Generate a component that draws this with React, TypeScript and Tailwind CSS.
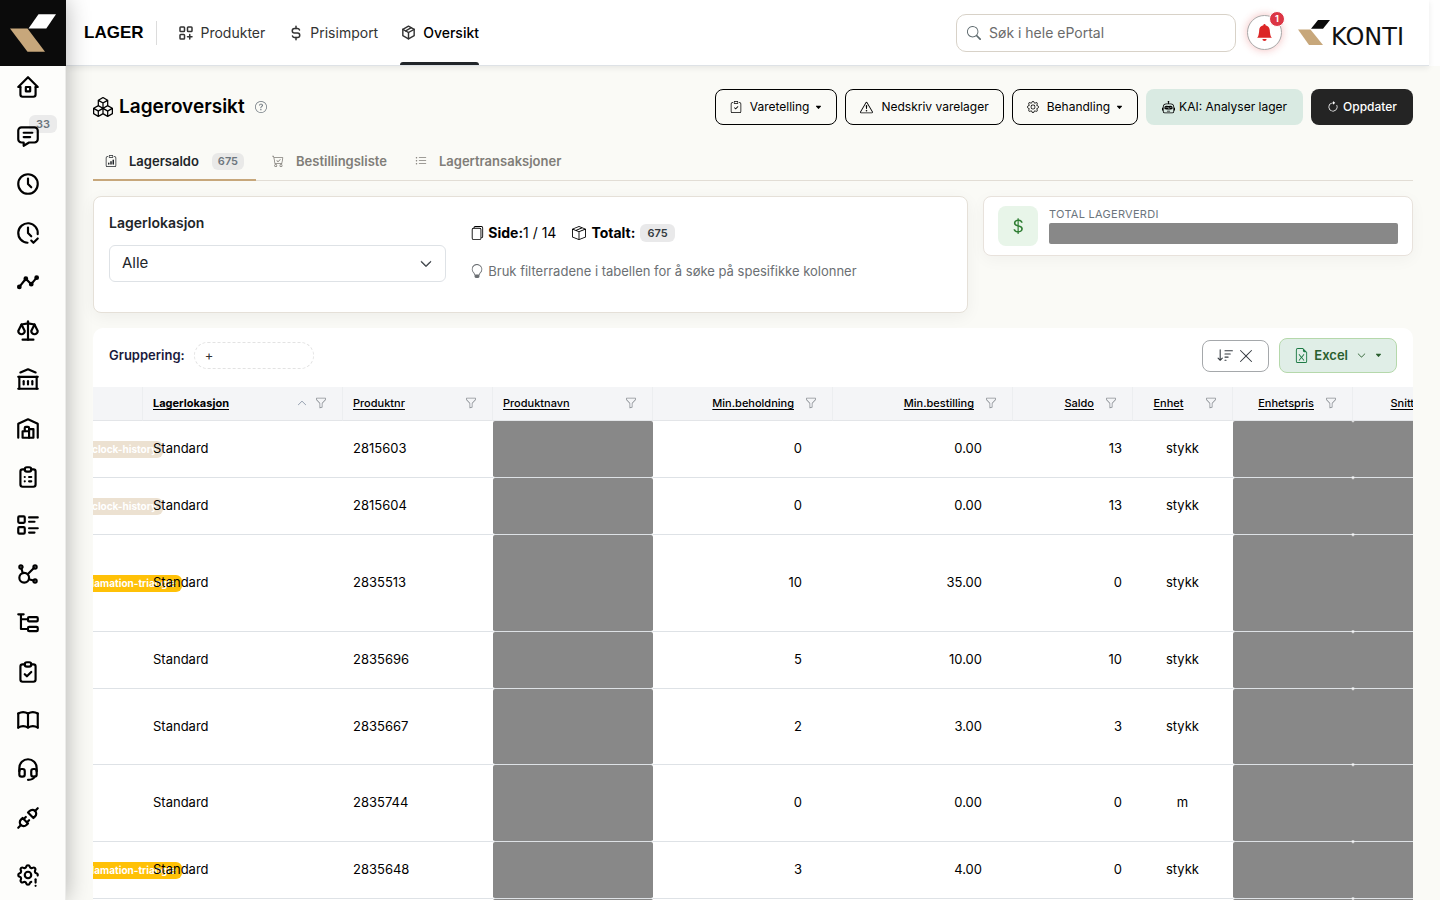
import React, { useState } from 'react';
import {
  BsArrowClockwise, BsBellFill, BsBoxes, BsBoxSeam, BsCaretDownFill, BsCartCheck, BsChevronDown, BsChevronUp,
  BsClipboardCheck, BsClipboardData, BsCurrencyDollar, BsExclamationTriangle, BsFileEarmarkExcel, BsFiles,
  BsFunnel, BsGear, BsLightbulb, BsListUl, BsQuestionCircle, BsRobot, BsSearch, BsSortDown, BsXLg,
} from 'react-icons/bs';
import {
  TbAffiliate, TbBook, TbBuildingBank, TbBuildingWarehouse, TbClipboardCheck, TbClipboardList, TbClock,
  TbClockCheck, TbCurrencyDollar, TbHeadset, TbHome2, TbLayoutGridAdd, TbListDetails, TbMessage, TbPackage,
  TbPlugConnected, TbScale, TbSettingsExclamation,
} from 'react-icons/tb';

const TrendIcon = ({ size }: { size: number }) => (
  <svg width={size} height={size} viewBox="0 0 24 24" fill="none" stroke="currentColor" strokeWidth={2} strokeLinecap="round" strokeLinejoin="round">
    <path d="M4 16.5l6 -7.5l5 5l5 -6" />
    <g fill="currentColor">
      <circle cx="4" cy="16.5" r="1.2" />
      <circle cx="10" cy="9" r="1.2" />
      <circle cx="15" cy="14" r="1.2" />
      <circle cx="20" cy="8" r="1.2" />
    </g>
  </svg>
);

const TreeIcon = ({ size }: { size: number }) => (
  <svg width={size} height={size} viewBox="0 0 24 24" fill="none" stroke="currentColor" strokeWidth={2} strokeLinecap="round" strokeLinejoin="round">
    <path d="M3 4h5M5.5 4v13.5h6.5M5.500 8.5h6.500" />
    <rect x="12" y="6.5" width="9" height="4" rx="1" />
    <rect x="12" y="15.5" width="9" height="4" rx="1" />
  </svg>
);

const menu = [
  { label: 'Hjem', icon: TbHome2 },
  { label: 'Meldinger', icon: TbMessage, count: 33 },
  { label: 'Timer', icon: TbClock },
  { label: 'Godkjenning', icon: TbClockCheck },
  { label: 'Rapporter', icon: TrendIcon },
  { label: 'Regnskap', icon: TbScale },
  { label: 'Bank', icon: TbBuildingBank },
  { label: 'Lager', icon: TbBuildingWarehouse },
  { label: 'Ordre', icon: TbClipboardList },
  { label: 'Lister', icon: TbListDetails },
  { label: 'Nettverk', icon: TbAffiliate },
  { label: 'Struktur', icon: TreeIcon },
  { label: 'Oppgaver', icon: TbClipboardCheck },
  { label: 'Håndbok', icon: TbBook },
  { label: 'Support', icon: TbHeadset },
  { label: 'Integrasjoner', icon: TbPlugConnected },
];

type Column = { title: string; width: string; align: string; sorted?: boolean };

const columns: Column[] = [
  { title: 'Lagerlokasjon', width: 'w-[200px]', align: 'text-left', sorted: true },
  { title: 'Produktnr', width: 'w-[150px]', align: 'text-left' },
  { title: 'Produktnavn', width: 'w-[160px]', align: 'text-left' },
  { title: 'Min.beholdning', width: 'w-[180px]', align: 'text-right' },
  { title: 'Min.bestilling', width: 'w-[180px]', align: 'text-right' },
  { title: 'Saldo', width: 'w-[120px]', align: 'text-right' },
  { title: 'Enhet', width: 'w-[100px]', align: 'text-center' },
  { title: 'Enhetspris', width: 'w-[120px]', align: 'text-right' },
  { title: 'Snittpris', width: 'w-[120px]', align: 'text-right' },
];

type Row = { nr: string; min: string; order: string; saldo: string; unit: string; height: string; flag?: 'history' | 'warning' };

const rows: Row[] = [
  { nr: '2815603', min: '0', order: '0.00', saldo: '13', unit: 'stykk', height: 'h-[57px]', flag: 'history' },
  { nr: '2815604', min: '0', order: '0.00', saldo: '13', unit: 'stykk', height: 'h-[57px]', flag: 'history' },
  { nr: '2835513', min: '10', order: '35.00', saldo: '0', unit: 'stykk', height: 'h-[97px]', flag: 'warning' },
  { nr: '2835696', min: '5', order: '10.00', saldo: '10', unit: 'stykk', height: 'h-[57px]' },
  { nr: '2835667', min: '2', order: '3.00', saldo: '3', unit: 'stykk', height: 'h-[76px]' },
  { nr: '2835744', min: '0', order: '0.00', saldo: '0', unit: 'm', height: 'h-[77px]' },
  { nr: '2835648', min: '3', order: '4.00', saldo: '0', unit: 'stykk', height: 'h-[57px]', flag: 'warning' },
  { nr: '2835650', min: '0', order: '0.00', saldo: '0', unit: 'stykk', height: 'h-[57px]' },
];

const Sidebar = () => (
  <aside className="relative z-20 flex w-[66px] shrink-0 flex-col border-r border-[#ececea] bg-[#fdfdfb] shadow-[0_0_24px_rgba(0,0,0,0.3)]">
    <a href="#" aria-label="Konti" className="-mr-px block h-[66px] bg-[#0b0b0b]">
      <svg width="66" height="66" viewBox="0 0 66 66">
        <path d="M28.5 28.5L38.5 14.3H56L46.3 28.5Z" fill="#fff" />
        <path d="M10 28.5H27.5L45 51.7H27.5Z" fill="#c7a77b" />
      </svg>
    </a>
    <nav className="flex flex-1 flex-col justify-between pt-2 pb-3 pl-[15px] text-black">
      <div className="flex flex-1 flex-col justify-between pb-[31px]">
        {menu.map(({ label, icon: Icon, count }) => (
          <a key={label} href="#" aria-label={label} className="relative block w-[26px]">
            {count && (
              <span className="absolute -top-2 left-[14px] rounded-md bg-[#ebebeb] px-[7px] py-px text-[11px] leading-4 font-semibold text-[#6c757d]">{count}</span>
            )}
            <span className="relative block"><Icon size={26} /></span>
          </a>
        ))}
      </div>
      <a href="#" aria-label="Innstillinger" className="block w-[26px]"><TbSettingsExclamation size={26} /></a>
    </nav>
  </aside>
);

const Header = () => (
  <div className="bg-[#fefefe]">
    <header className="relative z-10 mr-[11px] flex h-[66px] items-center border-b border-[#dee2e6] bg-white pr-4 pl-[18px] shadow-[0_2px_6px_rgba(0,0,0,0.08)]">
      <span className="border-r border-[#dcdcdc] pr-3 font-['Liberation_Sans',sans-serif] text-[17px] leading-6 font-bold text-black">LAGER</span>
      <nav className="ml-5 flex gap-[22px] self-stretch text-sm text-[#333]">
        <a href="#" className="flex items-center gap-[6px]"><TbLayoutGridAdd size={18} />Produkter</a>
        <a href="#" className="flex items-center gap-[5px]"><TbCurrencyDollar size={18} />Prisimport</a>
        <a href="#" className="relative flex items-center gap-[6px] font-medium text-black">
          <TbPackage size={17} className="text-[#333]" />Oversikt
          <span className="absolute inset-x-0 bottom-0 h-[3px] rounded-t-sm bg-[#212529]" />
        </a>
      </nav>
      <label className="ml-auto flex h-[38px] w-[280px] items-center gap-2 rounded-[10px] border border-[#d8d2c8] bg-white px-[10px]">
        <BsSearch size={14} className="text-[#5f6b6f]" />
        <input type="text" aria-label="Søk" placeholder="Søk i hele ePortal" className="min-w-0 flex-1 text-sm outline-none placeholder:text-[#6b6b6b]" />
      </label>
      <button aria-label="Varsler" className="relative ml-[11px] flex size-[35px] items-center justify-center rounded-full border border-[#a9a9a9] bg-white text-[#dc2626] shadow-[0_0_8px_rgba(220,38,38,0.3)]">
        <BsBellFill size={17} />
        <span className="absolute -top-[5px] -right-[4px] size-4 rounded-full border border-white bg-[#dc3545] text-center text-[9px] leading-[14px] font-bold text-white">1</span>
      </button>
      <a href="#" className="ml-4 flex w-[115px] items-center" aria-label="Konti">
        <svg width="33" height="28" viewBox="0 0 33 28" className="shrink-0">
          <path d="M13 9.7L20 1H32L25 9.7Z" fill="#0b0b0b" />
          <path d="M0 10.5H12.5L25 26H11Z" fill="#c7a77b" />
        </svg>
        <span className="pt-2 font-['DejaVu_Sans',sans-serif] text-2xl leading-6 text-[#111]">KONTI</span>
      </a>
    </header>
  </div>
);

const actionClass = 'flex h-9 items-center rounded-lg border border-black px-[14px] text-xs text-black';

const PageTitle = () => (
  <div className="flex items-center justify-between">
    <h1 className="flex items-center text-[19px] font-semibold text-black">
      <BsBoxes size={20} className="mr-[6px]" />Lageroversikt
      <BsQuestionCircle size={12} className="ml-[10px] text-[#6c757d]" />
    </h1>
    <div className="flex gap-2">
      <button className={actionClass}><BsClipboardCheck size={12} className="mr-2" />Varetelling<BsCaretDownFill size={7} className="ml-[6px]" /></button>
      <button className={actionClass}><BsExclamationTriangle size={13} className="mr-2" />Nedskriv varelager</button>
      <button className={actionClass}><BsGear size={12} className="mr-2" />Behandling<BsCaretDownFill size={7} className="ml-[6px]" /></button>
      <button className="flex h-9 items-center rounded-lg bg-[#d9eae2] px-4 text-xs text-black"><BsRobot size={13} className="mr-1" />KAI: Analyser lager</button>
      <button className="flex h-9 items-center rounded-lg bg-[#242424] px-4 text-xs font-medium text-white"><BsArrowClockwise size={12} className="mr-1" />Oppdater</button>
    </div>
  </div>
);

const Tabs = () => {
  const [active, setActive] = useState<number>(0);
  const tabs = [
    { label: 'Lagersaldo', icon: BsClipboardData, count: 675 },
    { label: 'Bestillingsliste', icon: BsCartCheck },
    { label: 'Lagertransaksjoner', icon: BsListUl },
  ];

  return (
    <div className="mt-[17px] flex gap-1 border-b border-[#e2ddd5]">
      {tabs.map(({ label, icon: Icon, count }, i) => (
        <button
          key={label}
          onClick={() => setActive(i)}
          className={`-mb-px flex h-[39px] items-center border-b-2 px-3 pt-[2px] text-[13px] font-semibold ${active === i ? 'border-[#c7a77b] text-[#212529]' : 'border-transparent text-[#807d78]'}`}>
          <Icon size={12} className="mr-3 mb-[2px]" />{label}
          {count && <span className="ml-[13px] rounded-md bg-[#e9e9e8] px-[6px] text-[11px] leading-[17px] text-[#6c757d]">{count}</span>}
        </button>
      ))}
    </div>
  );
};

const Filters = () => (
  <div className="mt-[15px] grid grid-cols-12 items-start gap-[15px]">
    <section className="col-span-8 grid grid-cols-12 gap-6 rounded-lg border border-[#e5e0d8] bg-white px-[15px] pt-[15px] pb-[30px] shadow-[0_4px_16px_rgba(0,0,0,0.05)]">
      <div className="col-span-5">
        <label htmlFor="location" className="block text-sm leading-[21px] font-semibold text-[#212529]">Lagerlokasjon</label>
        <div className="relative mt-3">
          <select id="location" className="h-[37px] w-full appearance-none rounded-md border border-[#dee2e6] bg-white px-3 text-[15px] text-[#212529]">
            <option>Alle</option>
          </select>
          <BsChevronDown size={12} strokeWidth={1} className="pointer-events-none absolute top-[13px] right-[14px] text-[#343a40]" />
        </div>
      </div>
      <div className="col-span-7 pt-[10px]">
        <div className="flex items-center text-sm leading-[21px] text-black">
          <BsFiles size={14} className="mr-1" /><b className="font-bold">Side:</b>1 / 14
          <BsBoxSeam size={14} className="mr-[5px] ml-4" /><b className="font-bold">Totalt:</b>
          <span className="ml-[5px] rounded-md bg-[#e9e9ea] px-[7px] text-[11px] leading-[18px] font-semibold text-[#343a40]">675</span>
        </div>
        <p className="mt-[18px] flex items-center text-[13px] leading-5 text-[#6b6f73]"><BsLightbulb size={14} className="mr-1" />Bruk filterradene i tabellen for å søke på spesifikke kolonner</p>
      </div>
    </section>
    <section className="col-span-4 flex gap-[11px] rounded-lg border border-[#e8e2dc] bg-white px-[14px] py-[9px] shadow-[0_4px_16px_rgba(0,0,0,0.04)]">
      <div className="flex size-10 items-center justify-center rounded-lg bg-[#e8f5e9] text-[#2e7d32]"><BsCurrencyDollar size={18} /></div>
      <div className="flex-1">
        <div className="text-[11px] leading-4 tracking-wide text-[#6c757d]">TOTAL LAGERVERDI</div>
        <div className="mt-px h-[21px] rounded-xs bg-[#888]" />
      </div>
    </section>
  </div>
);

const Flag = ({ kind }: { kind?: 'history' | 'warning' }) => {
  if (!kind) return null;
  return kind === 'history'
    ? <span className="absolute top-1/2 -right-5 -mt-2 rounded-md bg-[#ece1d1] px-[6px] text-[10px] leading-[17px] font-bold whitespace-nowrap text-white">clock-history</span>
    : <span className="absolute top-1/2 -right-[39px] -mt-2 rounded-md bg-[#ffc107] px-[6px] text-[10px] leading-[17px] font-bold whitespace-nowrap text-white">exclamation-triangle</span>;
};

const cell = 'border-b border-[#dee2e6] pr-[11px] pl-[10px]';
const hidden = 'rounded-xs border-b border-[#dee2e6] bg-[#888] bg-clip-padding';

const StockTable = () => (
  <section className="mt-[15px] overflow-hidden rounded-t-[10px] bg-white">
    <div className="flex h-[59px] items-center px-4 pb-1">
      <span className="text-[13px] font-semibold text-[#1a1a3c]">Gruppering:</span>
      <button className="ml-[9px] h-[27px] w-[120px] rounded-full border border-dashed border-[#e3e3e3] px-[10px] text-left text-[13px] leading-none text-[#333]">+</button>
      <button aria-label="Fjern sortering" className="ml-auto flex h-8 w-[67px] items-center justify-center gap-1 rounded-lg border border-[#a5a8ab] text-[#343a40]">
        <BsSortDown size={17} /><BsXLg size={16} />
      </button>
      <button className="ml-[10px] flex h-[35px] items-center rounded-lg border border-[#b5d8ab] bg-[#e0eee7] px-[14px] text-[13px] font-semibold text-[#2b5f2f]">
        <BsFileEarmarkExcel size={15} className="mr-[5px] text-[#1d7a45]" />Excel
        <BsChevronDown size={9} className="ml-[9px]" /><BsCaretDownFill size={7} className="ml-[9px]" />
      </button>
    </div>
    <table className="w-[1380px] table-fixed border-separate border-spacing-0 text-[13px] text-black">
      <thead>
        <tr className="h-[34px] bg-[#f4f5f7] text-[11px]">
          <th className="w-[50px] border-r border-b border-r-[#eceef0] border-b-[#e3e5e8]" />
          {columns.map(({ title, width, align, sorted }) => (
            <th key={title} className={`relative border-r border-b border-r-[#eceef0] border-b-[#e3e5e8] pr-[38px] pl-[10px] whitespace-nowrap underline underline-offset-2 ${sorted ? 'font-bold' : 'font-medium'} ${width} ${align}`}>
              {title}
              {sorted && <BsChevronUp size={10} className="absolute top-[11px] right-[35px] text-[#6b7a90]" />}
              <BsFunnel size={12} className="absolute top-[10px] right-[15px] text-[#8a8f94]" />
            </th>
          ))}
        </tr>
      </thead>
      <tbody>
        {rows.map((row) => (
          <tr key={row.nr} className={row.height}>
            <td className={`relative ${cell}`}><Flag kind={row.flag} /></td>
            <td className={cell}><span className="relative">Standard</span></td>
            <td className={cell}>{row.nr}</td>
            <td className={hidden} />
            <td className={`text-right ${cell}`}><span className="pr-5">{row.min}</span></td>
            <td className={`text-right ${cell}`}><span className="pr-5">{row.order}</span></td>
            <td className={`text-right ${cell}`}>{row.saldo}</td>
            <td className={`text-center ${cell}`}>{row.unit}</td>
            <td className={hidden} />
            <td className={hidden} />
          </tr>
        ))}
      </tbody>
    </table>
  </section>
);

const App = () => (
  <div className="flex h-screen overflow-hidden bg-[#fafaf6] font-['Inter',sans-serif]">
    <Sidebar />
    <div className="min-w-0 flex-1 overflow-hidden">
      <Header />
      <main className="px-[27px] pt-[23px]">
        <PageTitle />
        <Tabs />
        <Filters />
        <StockTable />
      </main>
    </div>
  </div>
);

export default App;
